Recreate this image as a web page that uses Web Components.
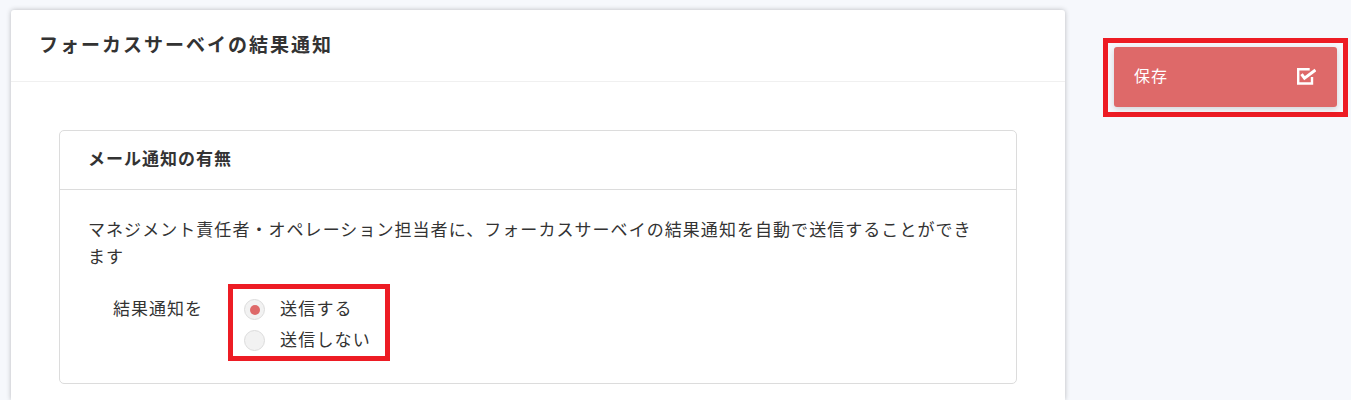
<!DOCTYPE html>
<html lang="ja">
<head>
<meta charset="utf-8">
<style>
html, body { margin: 0; height: 400px; overflow: hidden; }
body {
  background: #f6f8fc;
  color: #333;
  font-family: "Noto Sans CJK JP", "Noto Sans", sans-serif;
}
</style>
</head>
<body>
<settings-page>
  <notice-panel slot="main" title-text="フォーカスサーベイの結果通知">
    <notice-card title-text="メール通知の有無">
      <p>マネジメント責任者・オペレーション担当者に、フォーカスサーベイの結果通知を自動で送信することができます</p>
      <radio-row label="結果通知を">
        <mark-box class="options">
          <radio-item checked>送信する</radio-item>
          <radio-item>送信しない</radio-item>
        </mark-box>
      </radio-row>
    </notice-card>
  </notice-panel>
  <mark-box slot="side" class="save">
    <save-button>保存</save-button>
  </mark-box>
</settings-page>

<script>
/*
 * Page layout: main panel and side column.
 */
customElements.define('settings-page',
  class extends HTMLElement {
    constructor () {
      super()
      this.attachShadow({ mode: 'open' }).innerHTML = `
        <style>
          :host { display: flex; align-items: flex-start; padding: 10px 0 0 11px; }
          #main { width: 1054px; flex: none; }
          #side { margin: 28px 0 0 38px; }
          ::slotted(.save) { --mark-padding: 4px 6px 5px; }
        </style>
        <div id="main"><slot name="main"></slot></div>
        <div id="side"><slot name="side"></slot></div>`
    }
  }
)

/*
 * Red box drawn round the parts the screenshot points at.
 */
customElements.define('mark-box',
  class extends HTMLElement {
    constructor () {
      super()
      this.attachShadow({ mode: 'open' }).innerHTML = `
        <style>
          :host {
            display: block;
            border: 5px solid #ed1c24;
            padding: var(--mark-padding, 0);
            width: var(--mark-width, auto);
            box-sizing: border-box;
          }
        </style>
        <slot></slot>`
    }
  }
)

customElements.define('notice-panel',
  class extends HTMLElement {
    constructor () {
      super()
      this.attachShadow({ mode: 'open' }).innerHTML = `
        <style>
          :host {
            display: block;
            height: 390px;
            background: #fff;
            border-radius: 3px 3px 0 0;
            box-shadow: 0 0 5px rgba(0, 0, 0, .25);
          }
          h2 {
            margin: 0;
            height: 72px;
            box-sizing: border-box;
            padding-left: 28px;
            border-bottom: 1px solid #f0f0f0;
            font-size: 19px;
            font-weight: 700;
            line-height: 67px;
            letter-spacing: 2px;
          }
          #body { padding: 48px 48px 0; }
        </style>
        <h2>${this.getAttribute('title-text')}</h2>
        <div id="body"><slot></slot></div>`
    }
  }
)

customElements.define('notice-card',
  class extends HTMLElement {
    constructor () {
      super()
      this.attachShadow({ mode: 'open' }).innerHTML = `
        <style>
          :host {
            display: block;
            height: 254px;
            box-sizing: border-box;
            border: 1px solid #dcdcdc;
            border-radius: 5px;
          }
          h3 {
            margin: 0;
            height: 59px;
            box-sizing: border-box;
            padding-left: 28px;
            border-bottom: 1px solid #dcdcdc;
            font-size: 17px;
            font-weight: 700;
            line-height: 54px;
            letter-spacing: 1px;
          }
          #body { padding: 25px 28px 0; font-size: 17px; line-height: 27px; }
          ::slotted(p) { margin: 0 0 15px; letter-spacing: 1.05px; }
        </style>
        <h3>${this.getAttribute('title-text')}</h3>
        <div id="body"><slot></slot></div>`
    }
  }
)

customElements.define('radio-row',
  class extends HTMLElement {
    constructor () {
      super()
      this.attachShadow({ mode: 'open' }).innerHTML = `
        <style>
          :host { display: flex; align-items: flex-start; padding-left: 25px; }
          #label { width: 115px; flex: none; margin-top: 8px; line-height: 31px; letter-spacing: 1px; }
          ::slotted(.options) { --mark-padding: 5px 0 0 11px; --mark-width: 162px; }
        </style>
        <div id="label">${this.getAttribute('label')}</div>
        <slot></slot>`
    }
  }
)

customElements.define('radio-item',
  class extends HTMLElement {
    constructor () {
      super()
      this.attachShadow({ mode: 'open' }).innerHTML = `
        <style>
          :host { display: flex; align-items: center; height: 31px; letter-spacing: 1.2px; }
          #dot {
            width: 21px;
            height: 21px;
            box-sizing: border-box;
            margin-right: 15px;
            display: grid;
            place-items: center;
            border: 1px solid #dcdcdc;
            border-radius: 50%;
            background: #f2f2f2;
          }
          :host([checked]) #dot::after {
            content: "";
            width: 10px;
            height: 10px;
            border-radius: 50%;
            background: #de6969;
          }
          span#text { display: block; margin-top: -4px; }
        </style>
        <span id="dot"></span><span id="text"><slot></slot></span>`
    }
  }
)

customElements.define('save-button',
  class extends HTMLElement {
    constructor () {
      super()
      this.attachShadow({ mode: 'open' }).innerHTML = `
        <style>
          :host {
            display: flex;
            align-items: center;
            justify-content: space-between;
            width: 223px;
            height: 60px;
            box-sizing: border-box;
            padding: 0 21px 0 20px;
            background: #de6969;
            border-radius: 3px;
            box-shadow: 0 2px 6px rgba(0, 0, 0, .15);
            color: #fff;
            font-size: 16px;
            letter-spacing: 1px;
          }
          #text { display: block; margin-top: -4px; }
          svg { display: block; }
        </style>
        <span id="text"><slot></slot></span>
        <svg width="20" height="20" viewBox="0 0 20 20" fill="none" stroke="#fff">
          <path d="M16 10v6.500H2.200V2.200h11.500" stroke-width="2.400"/>
          <path d="M5.500 7.200L8.500 11.200L19.500 3" stroke-width="3"/>
        </svg>`
    }
  }
)
</script>
</body>
</html>
